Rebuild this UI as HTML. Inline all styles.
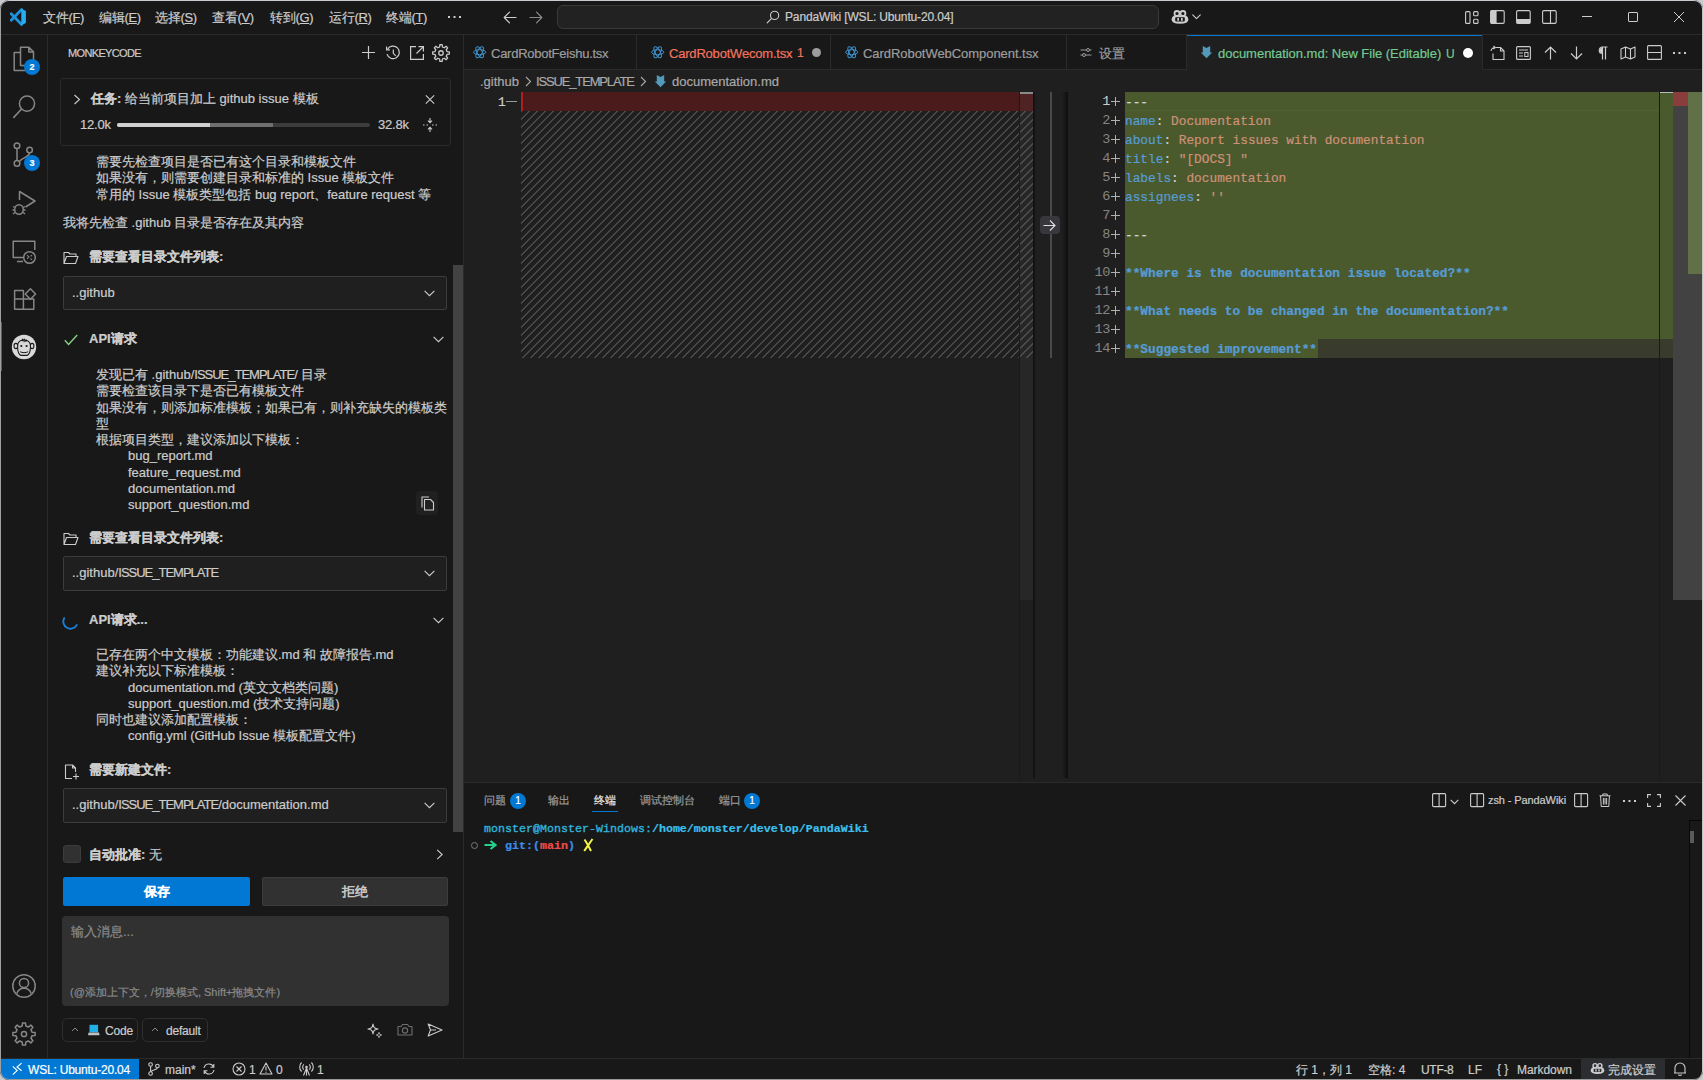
<!DOCTYPE html>
<html><head><meta charset="utf-8">
<style>
*{box-sizing:border-box;margin:0;padding:0}
html,body{width:1703px;height:1080px;overflow:hidden;background:#c8cacd}
body{font-family:"Liberation Sans",sans-serif;font-size:13px;color:#cccccc;position:relative;-webkit-text-stroke:0.2px currentColor}
.a{position:absolute;white-space:nowrap}
svg{position:absolute;overflow:visible}
#win{position:absolute;left:0;top:0;width:1703px;height:1080px;background:#181818;border-radius:9px;overflow:hidden}
#frame{position:absolute;left:0;top:0;width:1703px;height:1080px;border:1px solid #a0a0a0;border-top-color:#c8cbd0;border-right-color:#c4c4c4;border-bottom-color:#9a9a9a;border-radius:9px;pointer-events:none}
.mono{font-family:"Liberation Mono",monospace}
.b{font-weight:bold}
.ic{fill:none;stroke:#cccccc;stroke-width:1.2;stroke-linecap:round;stroke-linejoin:round}
</style></head><body>
<div id="win">
<!-- TITLE BAR -->
<div class="a" style="left:0;top:34px;width:1703px;height:1px;background:#2b2b2b"></div>
<svg style="left:6px;top:6px" width="24" height="24" viewBox="0 0 24 24"><path d="M15.6 3.6L5.2 14.3M15.6 18.4L5.2 7.7" stroke="#1c93dc" stroke-width="2.8" stroke-linecap="round"/><path d="M15.3 2.8L19.9 4.9V17.1L15.3 19.2Z" fill="#27acf2"/></svg>
<div class="a" style="left:43px;top:9px;font-size:13px;color:#cccccc;letter-spacing:-0.3px">文件(<u>F</u>)</div>
<div class="a" style="left:99px;top:9px;font-size:13px;color:#cccccc;letter-spacing:-0.3px">编辑(<u>E</u>)</div>
<div class="a" style="left:155px;top:9px;font-size:13px;color:#cccccc;letter-spacing:-0.3px">选择(<u>S</u>)</div>
<div class="a" style="left:212px;top:9px;font-size:13px;color:#cccccc;letter-spacing:-0.3px">查看(<u>V</u>)</div>
<div class="a" style="left:270px;top:9px;font-size:13px;color:#cccccc;letter-spacing:-0.3px">转到(<u>G</u>)</div>
<div class="a" style="left:329px;top:9px;font-size:13px;color:#cccccc;letter-spacing:-0.3px">运行(<u>R</u>)</div>
<div class="a" style="left:386px;top:9px;font-size:13px;color:#cccccc;letter-spacing:-0.3px">终端(<u>T</u>)</div>
<svg style="left:448px;top:16px" width="14" height="3"><rect x="0" y="0" width="2" height="2" fill="#ccc"/><rect x="5.5" y="0" width="2" height="2" fill="#ccc"/><rect x="11" y="0" width="2" height="2" fill="#ccc"/></svg>
<svg style="left:503px;top:11px" width="14" height="13" viewBox="0 0 14 13"><path class="ic" d="M13 6.5H1.2M6.5 1.2L1.2 6.5L6.5 11.8" style="stroke:#cccccc"/></svg>
<svg style="left:529px;top:11px" width="14" height="13" viewBox="0 0 14 13"><path class="ic" d="M1 6.5H12.8M7.5 1.2L12.8 6.5L7.5 11.8" style="stroke:#8a8a8a"/></svg>
<div class="a" style="left:557px;top:5px;width:602px;height:24px;background:#222222;border:1px solid #3a3a3a;border-radius:6px"></div>
<svg style="left:766px;top:10px" width="14" height="14" viewBox="0 0 14 14"><circle cx="8.6" cy="5.4" r="4.1" class="ic" style="stroke:#cccccc;stroke-width:1.1"/><path d="M5.6 8.4L1.2 12.8" class="ic" style="stroke:#cccccc;stroke-width:1.2"/></svg>
<div class="a" style="left:785px;top:10px;font-size:12px;color:#cccccc;letter-spacing:-0.15px">PandaWiki [WSL: Ubuntu-20.04]</div>
<svg style="left:1171px;top:9px" width="18" height="16" viewBox="0 0 18 16"><path d="M2.8 6.8Q0.6 7.8 0.6 10.6Q0.6 14.8 9 14.8Q17.4 14.8 17.4 10.6Q17.4 7.8 15.2 6.8Z" fill="#cccccc"/><rect x="4.2" y="8.2" width="9.6" height="4.2" rx="1" fill="#181818"/><rect x="6.3" y="9" width="1.7" height="2.8" fill="#ccc"/><rect x="10" y="9" width="1.7" height="2.8" fill="#ccc"/><circle cx="6" cy="4.5" r="2.5" fill="#181818" stroke="#ccc" stroke-width="1.8"/><circle cx="11.9" cy="4.5" r="2.5" fill="#181818" stroke="#ccc" stroke-width="1.8"/></svg>
<svg style="left:1192px;top:14px" width="9" height="6" viewBox="0 0 9 6"><path d="M0.7 0.8L4.5 4.6L8.3 0.8" class="ic" style="stroke:#ccc;stroke-width:1.1"/></svg>
<!-- layout icons -->
<svg style="left:1465px;top:11px" width="15" height="13" viewBox="0 0 15 13"><rect x="0.6" y="0.6" width="4.4" height="11.8" rx="1" class="ic" style="stroke-width:1.1"/><rect x="8.6" y="0.6" width="4.4" height="4.2" rx="1" class="ic" style="stroke-width:1.1"/><rect x="8.6" y="8.2" width="4.4" height="4.2" rx="1" class="ic" style="stroke-width:1.1"/></svg>
<svg style="left:1490px;top:10px" width="15" height="14" viewBox="0 0 15 14"><rect x="0.6" y="0.6" width="13.6" height="12.8" rx="1.3" class="ic" style="stroke-width:1.1"/><rect x="0.6" y="0.6" width="6" height="12.8" fill="#ccc"/></svg>
<svg style="left:1516px;top:10px" width="15" height="14" viewBox="0 0 15 14"><rect x="0.6" y="0.6" width="13.6" height="12.8" rx="1.3" class="ic" style="stroke-width:1.1"/><rect x="0.6" y="9" width="13.6" height="4.4" fill="#ccc"/></svg>
<svg style="left:1542px;top:10px" width="15" height="14" viewBox="0 0 15 14"><rect x="0.6" y="0.6" width="13.6" height="12.8" rx="1.3" class="ic" style="stroke-width:1.1"/><path d="M8.5 0.6V13.4" class="ic" style="stroke-width:1.1"/></svg>
<div class="a" style="left:1582px;top:16px;width:10px;height:1px;background:#cccccc"></div>
<div class="a" style="left:1628px;top:12px;width:10px;height:10px;border:1px solid #cccccc;border-radius:1px"></div>
<svg style="left:1674px;top:12px" width="10" height="10" viewBox="0 0 10 10"><path d="M0 0L10 10M10 0L0 10" stroke="#ccc" stroke-width="1"/></svg>
<!-- ACTIVITY BAR -->
<div class="a" style="left:47px;top:35px;width:1px;height:1023px;background:#2b2b2b"></div>
<svg style="left:12px;top:46px" width="24" height="26" viewBox="0 0 24 26"><path d="M8.5 1.2H16.8L21.5 5.9V19.5H8.5Z M16.8 1.2V5.9H21.5" fill="none" stroke="#868686" stroke-width="1.5" stroke-linejoin="round"/><path d="M8.5 6.5H2.2V24.5H15.5V19.5" fill="none" stroke="#868686" stroke-width="1.5" stroke-linejoin="round"/></svg>
<div class="a" style="left:24px;top:59px;width:16px;height:16px;border-radius:8px;background:#0078d4;color:#fff;font-size:9px;font-weight:bold;text-align:center;line-height:16px">2</div>
<svg style="left:12px;top:94px" width="25" height="26" viewBox="0 0 25 26"><circle cx="15" cy="9.6" r="7.6" fill="none" stroke="#868686" stroke-width="1.5"/><path d="M9.6 15L1.8 23.4" stroke="#868686" stroke-width="1.6" stroke-linecap="round"/></svg>
<svg style="left:12px;top:142px" width="24" height="26" viewBox="0 0 24 26"><circle cx="5" cy="3.8" r="2.8" fill="none" stroke="#868686" stroke-width="1.5"/><circle cx="5" cy="21.4" r="2.8" fill="none" stroke="#868686" stroke-width="1.5"/><circle cx="17.6" cy="8" r="2.8" fill="none" stroke="#868686" stroke-width="1.5"/><path d="M5 6.6V18.6M17.6 10.8C17.6 15 12 14.5 7.4 19.5" fill="none" stroke="#868686" stroke-width="1.5"/></svg>
<div class="a" style="left:24px;top:155px;width:16px;height:16px;border-radius:8px;background:#0078d4;color:#fff;font-size:9px;font-weight:bold;text-align:center;line-height:16px">3</div>
<svg style="left:11px;top:190px" width="26" height="26" viewBox="0 0 26 26"><path d="M8.5 10V1.5L24 11L14.5 17" fill="none" stroke="#868686" stroke-width="1.5" stroke-linejoin="round"/><ellipse cx="8" cy="19.5" rx="4.3" ry="4.8" fill="none" stroke="#868686" stroke-width="1.5"/><path d="M2 16.5L3.8 17.5M14 16.5L12.2 17.5M1.5 20H3.7M14.5 20H12.3M2 24L3.8 22.5M14 24L12.2 22.5" fill="none" stroke="#868686" stroke-width="1.4"/></svg>
<svg style="left:12px;top:240px" width="25" height="24" viewBox="0 0 25 24"><path d="M11 17.5H1.2V1.2H22.8V10" fill="none" stroke="#868686" stroke-width="1.5" stroke-linejoin="round"/><path d="M5 21.5H11" stroke="#868686" stroke-width="1.5"/><circle cx="17.5" cy="17.5" r="5.8" fill="none" stroke="#868686" stroke-width="1.5"/><path d="M15 15.2L17 17L15 18.8M20 15.2L18.6 16.3M18.6 18.5L20 19.8" fill="none" stroke="#868686" stroke-width="1.1"/></svg>
<svg style="left:13px;top:288px" width="24" height="24" viewBox="0 0 24 24"><path d="M1.6 2.6H10.4V11H20.8V21.2H1.6Z M1.6 11H10.4V21.2" fill="none" stroke="#868686" stroke-width="1.5" stroke-linejoin="round"/><path d="M17.4 0.8L22.6 6L17.4 11.2L12.2 6Z" fill="none" stroke="#868686" stroke-width="1.5" stroke-linejoin="round"/></svg>
<div class="a" style="left:0px;top:322px;width:2px;height:49px;background:#0078d4"></div>
<svg style="left:12px;top:335px" width="24" height="24" viewBox="0 0 24 24"><circle cx="12" cy="12" r="12.2" fill="#d9d9d9"/><g fill="none" stroke="#1a1a1a" stroke-width="1.1" stroke-linecap="round"><path d="M5.6 9.6C6.4 6.6 8.8 5 12 5C15.2 5 17.6 6.6 18.4 9.6"/><ellipse cx="3.9" cy="11" rx="1.9" ry="2.6"/><ellipse cx="20.1" cy="11" rx="1.8" ry="2.6"/><path d="M5.7 13.2C5.8 17 7 19.6 9 20.4H15C17 19.6 18.2 17 18.3 13.2"/><path d="M8.4 16.9C10.4 18 13.6 18 15.8 16.9" stroke-width="1"/></g><path d="M9 6L10.8 3.3L11.8 5L12.7 3.2L13.5 5.2L14.8 4.4L15 6.4Z M11.3 5.5L12 8L12.8 5.5Z" fill="#1a1a1a"/><circle cx="9.3" cy="11" r="1.1" fill="#1a1a1a"/><circle cx="14.6" cy="11" r="1.1" fill="#1a1a1a"/></svg>
<svg style="left:12px;top:974px" width="24" height="24" viewBox="0 0 24 24"><circle cx="12" cy="12" r="11.2" fill="none" stroke="#868686" stroke-width="1.5"/><circle cx="12" cy="9" r="4.6" fill="none" stroke="#868686" stroke-width="1.5"/><path d="M4.8 19.5C6 16 8.8 14.3 12 14.3C15.2 14.3 18 16 19.2 19.5" fill="none" stroke="#868686" stroke-width="1.5"/></svg>
<svg style="left:12px;top:1022px" width="24" height="24" viewBox="0 0 24 24"><path id="gear" d="M19.99 10.15L23.10 10.51L23.10 13.49L19.99 13.85L18.96 16.34L20.90 18.79L18.79 20.90L16.34 18.96L13.85 19.99L13.49 23.10L10.51 23.10L10.15 19.99L7.66 18.96L5.21 20.90L3.10 18.79L5.04 16.34L4.01 13.85L0.90 13.49L0.90 10.51L4.01 10.15L5.04 7.66L3.10 5.21L5.21 3.10L7.66 5.04L10.15 4.01L10.51 0.90L13.49 0.90L13.85 4.01L16.34 5.04L18.79 3.10L20.90 5.21L18.96 7.66Z" fill="none" stroke="#868686" stroke-width="1.5" stroke-linejoin="round"/><circle cx="12" cy="12" r="2.6" fill="none" stroke="#868686" stroke-width="1.5"/></svg>
<!-- SIDEBAR -->
<div class="a" style="left:463px;top:35px;width:1px;height:1023px;background:#2b2b2b"></div>
<div class="a" style="left:68px;top:45px;font-size:11px;line-height:16px;letter-spacing:-0.65px;color:#cccccc">MONKEYCODE</div>
<svg style="left:361px;top:45px" width="15" height="15" viewBox="0 0 15 15"><path d="M7.5 1V14M1 7.5H14" stroke="#ccc" stroke-width="1.2"/></svg>
<svg style="left:385px;top:45px" width="16" height="16" viewBox="0 0 16 16"><path d="M2.6 4.2A6.3 6.3 0 1 1 2 9.2" fill="none" stroke="#ccc" stroke-width="1.2"/><path d="M1.6 1.6V4.8H4.8" fill="none" stroke="#ccc" stroke-width="1.2"/><path d="M8.3 4.5V8.3L10.8 10.8" fill="none" stroke="#ccc" stroke-width="1.2"/></svg>
<svg style="left:409px;top:45px" width="16" height="16" viewBox="0 0 16 16"><path d="M7 1.6H1.6V14.4H14.4V9" fill="none" stroke="#ccc" stroke-width="1.2"/><path d="M9.5 1.6H14.4V6.5M14.4 1.6L7.5 8.5" fill="none" stroke="#ccc" stroke-width="1.2"/></svg>
<svg style="left:432px;top:44px" width="18" height="18" viewBox="0 0 24 24"><path d="M19.99 10.15L23.10 10.51L23.10 13.49L19.99 13.85L18.96 16.34L20.90 18.79L18.79 20.90L16.34 18.96L13.85 19.99L13.49 23.10L10.51 23.10L10.15 19.99L7.66 18.96L5.21 20.90L3.10 18.79L5.04 16.34L4.01 13.85L0.90 13.49L0.90 10.51L4.01 10.15L5.04 7.66L3.10 5.21L5.21 3.10L7.66 5.04L10.15 4.01L10.51 0.90L13.49 0.90L13.85 4.01L16.34 5.04L18.79 3.10L20.90 5.21L18.96 7.66Z" fill="none" stroke="#ccc" stroke-width="1.7" stroke-linejoin="round"/><circle cx="12" cy="12" r="3" fill="none" stroke="#ccc" stroke-width="1.7"/></svg>
<!-- task box -->
<div class="a" style="left:60px;top:78px;width:391px;height:68px;border:1px solid #2b2b2b;border-radius:3px"></div>
<svg style="left:73px;top:94px" width="8" height="11" viewBox="0 0 8 11"><path d="M1.5 1L6.5 5.5L1.5 10" fill="none" stroke="#ccc" stroke-width="1.1"/></svg>
<div class="a" style="left:91px;top:91px;line-height:16px;color:#cccccc"><b>任务:</b> 给当前项目加上 github issue 模板</div>
<svg style="left:425px;top:95px" width="10" height="9" viewBox="0 0 10 9"><path d="M0.8 0.3L9.2 8.7M9.2 0.3L0.8 8.7" stroke="#ccc" stroke-width="1.1"/></svg>
<div class="a" style="left:80px;top:117px;line-height:16px;color:#cccccc;letter-spacing:-0.2px">12.0k</div>
<div class="a" style="left:117px;top:123px;width:253px;height:4px;border-radius:2px;background:#3c3c3c;overflow:hidden"><div class="a" style="left:0;top:0;width:156px;height:4px;background:#6f6f6f"></div><div class="a" style="left:0;top:0;width:93px;height:4px;background:#d0d0d0"></div></div>
<div class="a" style="left:378px;top:117px;line-height:16px;color:#cccccc;letter-spacing:-0.2px">32.8k</div>
<svg style="left:422px;top:117px" width="16" height="16" viewBox="0 0 16 16"><path d="M8 1V5.5M6 3.6L8 5.6L10 3.6M8 15V10.5M6 12.4L8 10.4L10 12.4" fill="none" stroke="#ccc" stroke-width="1.1"/><path d="M1 8H2.5M4.5 8H6M10 8H11.5M13.5 8H15" stroke="#ccc" stroke-width="1.1"/></svg>
<div class="a" style="left:96px;top:154px;line-height:16.3px;color:#cccccc">需要先检查项目是否已有这个目录和模板文件<br>如果没有，则需要创建目录和标准的 Issue 模板文件<br>常用的 Issue 模板类型包括 bug report、feature request 等</div>
<div class="a" style="left:63px;top:215px;line-height:16px;color:#cccccc">我将先检查 .github 目录是否存在及其内容</div>
<!-- list 1 -->
<svg style="left:63px;top:251px" width="16" height="14" viewBox="0 0 16 14"><path d="M1 12.5V1.5H5.5L7 3H13V5.5M1 12.5L3.5 5.5H15L12.5 12.5Z" fill="none" stroke="#ccc" stroke-width="1.1" stroke-linejoin="round"/></svg>
<div class="a b" style="left:89px;top:249px;line-height:16px;color:#cccccc">需要查看目录文件列表:</div>
<div class="a" style="left:63px;top:276px;width:384px;height:34px;background:#1f1f1f;border:1px solid #3c3c3c;border-radius:2px"></div>
<div class="a" style="left:72px;top:285px;line-height:16px;color:#cccccc">..github</div>
<svg style="left:424px;top:290px" width="11" height="7" viewBox="0 0 11 7"><path d="M0.6 0.8L5.5 5.7L10.4 0.8" fill="none" stroke="#ccc" stroke-width="1.1"/></svg>
<svg style="left:64px;top:334px" width="14" height="12" viewBox="0 0 14 12"><path d="M0.8 6.2L4.6 10.5L13.2 1" fill="none" stroke="#89d185" stroke-width="1.4"/></svg>
<div class="a b" style="left:89px;top:331px;line-height:16px;color:#cccccc">API请求</div>
<svg style="left:433px;top:336px" width="11" height="7" viewBox="0 0 11 7"><path d="M0.6 0.8L5.5 5.7L10.4 0.8" fill="none" stroke="#ccc" stroke-width="1.1"/></svg>
<div class="a" style="left:96px;top:367px;line-height:16.3px;color:#cccccc;white-space:pre">发现已有 .github/<span style="letter-spacing:-1px">ISSUE_TEMPLATE</span>/ 目录
需要检查该目录下是否已有模板文件
如果没有，则添加标准模板；如果已有，则补充缺失的模板类
型
根据项目类型，建议添加以下模板：
<span style="display:inline-block;width:32px"></span>bug_report.md
<span style="display:inline-block;width:32px"></span>feature_request.md
<span style="display:inline-block;width:32px"></span>documentation.md
<span style="display:inline-block;width:32px"></span>support_question.md</div>
<div class="a" style="left:416px;top:491px;width:22px;height:24px;background:#202020;border-radius:4px"></div>
<svg style="left:420px;top:496px" width="15" height="15" viewBox="0 0 15 15"><path d="M4.5 3.5H10.5L13.5 6.5V14H4.5Z" fill="none" stroke="#ccc" stroke-width="1.1" stroke-linejoin="round"/><path d="M2 11.5V1H9" fill="none" stroke="#ccc" stroke-width="1.1"/></svg>
<!-- list 2 -->
<svg style="left:63px;top:532px" width="16" height="14" viewBox="0 0 16 14"><path d="M1 12.5V1.5H5.5L7 3H13V5.5M1 12.5L3.5 5.5H15L12.5 12.5Z" fill="none" stroke="#ccc" stroke-width="1.1" stroke-linejoin="round"/></svg>
<div class="a b" style="left:89px;top:530px;line-height:16px;color:#cccccc">需要查看目录文件列表:</div>
<div class="a" style="left:63px;top:556px;width:384px;height:35px;background:#1f1f1f;border:1px solid #3c3c3c;border-radius:2px"></div>
<div class="a" style="left:72px;top:565px;line-height:16px;color:#cccccc">..github/<span style="letter-spacing:-1px">ISSUE_TEMPLATE</span></div>
<svg style="left:424px;top:570px" width="11" height="7" viewBox="0 0 11 7"><path d="M0.6 0.8L5.5 5.7L10.4 0.8" fill="none" stroke="#ccc" stroke-width="1.1"/></svg>
<svg style="left:63px;top:614px" width="15" height="14" viewBox="0 0 15 14"><path d="M1.2 4A6.3 6.3 0 0 0 13.8 11" fill="none" stroke="#1a7fd6" stroke-width="1.8" stroke-linecap="round"/></svg>
<div class="a b" style="left:89px;top:612px;line-height:16px;color:#cccccc">API请求...</div>
<svg style="left:433px;top:617px" width="11" height="7" viewBox="0 0 11 7"><path d="M0.6 0.8L5.5 5.7L10.4 0.8" fill="none" stroke="#ccc" stroke-width="1.1"/></svg>
<div class="a" style="left:96px;top:647px;line-height:16.3px;color:#cccccc;white-space:pre">已存在两个中文模板：功能建议.md 和 故障报告.md
建议补充以下标准模板：
<span style="display:inline-block;width:32px"></span>documentation.md (英文文档类问题)
<span style="display:inline-block;width:32px"></span>support_question.md (技术支持问题)
同时也建议添加配置模板：
<span style="display:inline-block;width:32px"></span>config.yml (GitHub Issue 模板配置文件)</div>
<!-- new file -->
<svg style="left:64px;top:764px" width="16" height="16" viewBox="0 0 16 16"><path d="M8 14.5H1.5V1H8.5L11.5 4V8M8.5 1V4H11.5" fill="none" stroke="#ccc" stroke-width="1.1" stroke-linejoin="round"/><path d="M12 9.5V15.5M9 12.5H15" stroke="#ccc" stroke-width="1.1"/></svg>
<div class="a b" style="left:89px;top:762px;line-height:16px;color:#cccccc">需要新建文件:</div>
<div class="a" style="left:63px;top:788px;width:384px;height:35px;background:#1f1f1f;border:1px solid #3c3c3c;border-radius:2px"></div>
<div class="a" style="left:72px;top:797px;line-height:16px;color:#cccccc">..github/<span style="letter-spacing:-1px">ISSUE_TEMPLATE</span>/documentation.md</div>
<svg style="left:424px;top:802px" width="11" height="7" viewBox="0 0 11 7"><path d="M0.6 0.8L5.5 5.7L10.4 0.8" fill="none" stroke="#ccc" stroke-width="1.1"/></svg>
<!-- sidebar scrollbar -->
<div class="a" style="left:453px;top:265px;width:10px;height:567px;background:#424242"></div>
<!-- auto approve -->
<div class="a" style="left:63px;top:845px;width:18px;height:18px;background:#313131;border:1px solid #3c3c3c;border-radius:3px"></div>
<div class="a" style="left:89px;top:847px;line-height:16px;color:#cccccc"><b>自动批准:</b> 无</div>
<svg style="left:436px;top:849px" width="8" height="11" viewBox="0 0 8 11"><path d="M1.2 0.8L6.2 5.5L1.2 10.2" fill="none" stroke="#ccc" stroke-width="1.1"/></svg>
<div class="a b" style="left:63px;top:877px;width:187px;height:29px;background:#0078d4;border-radius:2px;color:#fff;text-align:center;line-height:29px">保存</div>
<div class="a" style="left:262px;top:877px;width:186px;height:29px;background:#313131;border:1px solid #3c3c3c;border-radius:2px;color:#cccccc;text-align:center;line-height:27px;-webkit-text-stroke:0.5px #cccccc">拒绝</div>
<div class="a" style="left:62px;top:916px;width:387px;height:90px;background:#313131;border-radius:4px"></div>
<div class="a" style="left:71px;top:924px;line-height:16px;color:#8a8a8a">输入消息...</div>
<div class="a" style="left:70px;top:985px;line-height:14px;font-size:11px;color:#8a8a8a">(@添加上下文，/切换模式, Shift+拖拽文件)</div>
<div class="a" style="left:62px;top:1018px;width:76px;height:24px;border:1px solid #2f2f2f;border-radius:5px"></div>
<div class="a" style="left:142px;top:1018px;width:66px;height:24px;border:1px solid #2f2f2f;border-radius:5px"></div>
<svg style="left:71px;top:1027px" width="8" height="5" viewBox="0 0 8 5"><path d="M1 4L4 1L7 4" fill="none" stroke="#8a8a8a" stroke-width="1"/></svg>
<svg style="left:88px;top:1024px" width="13" height="12" viewBox="0 0 13 12"><rect x="1.5" y="0.8" width="8.6" height="7.5" fill="#22b0e8"/><path d="M0.6 8.6H11L11.6 11.2H0Z" fill="#c0c0c0"/></svg>
<div class="a" style="left:105px;top:1023px;line-height:16px;font-size:12px;color:#cccccc;letter-spacing:-0.2px">Code</div>
<svg style="left:151px;top:1027px" width="8" height="5" viewBox="0 0 8 5"><path d="M1 4L4 1L7 4" fill="none" stroke="#8a8a8a" stroke-width="1"/></svg>
<div class="a" style="left:166px;top:1023px;line-height:16px;font-size:12px;color:#cccccc;letter-spacing:-0.2px">default</div>
<svg style="left:367px;top:1023px" width="16" height="15" viewBox="0 0 16 15"><path d="M6 1C6.5 4.5 7.5 5.5 11 6C7.5 6.5 6.5 7.5 6 11C5.5 7.5 4.5 6.5 1 6C4.5 5.5 5.5 4.5 6 1Z" fill="none" stroke="#ccc" stroke-width="1.1" stroke-linejoin="round"/><path d="M12 9.5C12.2 11 12.7 11.6 14.5 12C12.7 12.4 12.2 13 12 14.5C11.8 13 11.3 12.4 9.5 12C11.3 11.6 11.8 11 12 9.5Z" fill="none" stroke="#ccc" stroke-width="1"/></svg>
<svg style="left:397px;top:1023px" width="16" height="13" viewBox="0 0 16 13"><path d="M1 3.5H4L5.5 1.5H10.5L12 3.5H15V12H1Z" fill="none" stroke="#6f6f6f" stroke-width="1.1" stroke-linejoin="round"/><circle cx="8" cy="7.5" r="2.6" fill="none" stroke="#6f6f6f" stroke-width="1.1"/></svg>
<svg style="left:427px;top:1023px" width="16" height="14" viewBox="0 0 16 14"><path d="M1.2 1L15 7L1.2 13L3.5 7Z M3.5 7H9" fill="none" stroke="#ccc" stroke-width="1.1" stroke-linejoin="round"/></svg>
<!-- EDITOR -->
<div class="a" style="left:464px;top:35px;width:1239px;height:747px;background:#1f1f1f"></div>
<!-- tab bar -->
<div class="a" style="left:464px;top:35px;width:1239px;height:35px;background:#181818"></div>
<div class="a" style="left:464px;top:69px;width:1239px;height:1px;background:#2b2b2b"></div>
<div class="a" style="left:636px;top:35px;width:1px;height:34px;background:#2b2b2b"></div>
<div class="a" style="left:830px;top:35px;width:1px;height:34px;background:#2b2b2b"></div>
<div class="a" style="left:1066px;top:35px;width:1px;height:34px;background:#2b2b2b"></div>
<div class="a" style="left:1186px;top:35px;width:1px;height:34px;background:#2b2b2b"></div>
<div class="a" style="left:1482px;top:35px;width:1px;height:34px;background:#2b2b2b"></div>
<div class="a" style="left:1187px;top:35px;width:295px;height:35px;background:#1f1f1f"></div>
<div class="a" style="left:1187px;top:35px;width:295px;height:1px;background:#0078d4"></div>
<svg style="left:473px;top:46px" width="14" height="13" viewBox="0 0 14 13"><g fill="none" stroke="#3f91cc" stroke-width="1"><ellipse cx="6.7" cy="6.2" rx="6.1" ry="2.5"/><ellipse cx="6.7" cy="6.2" rx="6.1" ry="2.5" transform="rotate(60 6.7 6.2)"/><ellipse cx="6.7" cy="6.2" rx="6.1" ry="2.5" transform="rotate(-60 6.7 6.2)"/></g></svg>
<div class="a" style="left:491px;top:46px;line-height:16px;color:#9d9d9d;letter-spacing:-0.25px">CardRobotFeishu.tsx</div>
<svg style="left:651px;top:46px" width="14" height="13" viewBox="0 0 14 13"><g fill="none" stroke="#3f91cc" stroke-width="1"><ellipse cx="6.7" cy="6.2" rx="6.1" ry="2.5"/><ellipse cx="6.7" cy="6.2" rx="6.1" ry="2.5" transform="rotate(60 6.7 6.2)"/><ellipse cx="6.7" cy="6.2" rx="6.1" ry="2.5" transform="rotate(-60 6.7 6.2)"/></g></svg>
<div class="a" style="left:669px;top:46px;line-height:16px;color:#f0745e;letter-spacing:-0.2px">CardRobotWecom.tsx</div>
<div class="a" style="left:797px;top:45px;line-height:16px;color:#f0745e;font-size:12px">1</div>
<div class="a" style="left:812px;top:48px;width:9px;height:9px;border-radius:5px;background:#9d9d9d"></div>
<svg style="left:845px;top:46px" width="14" height="13" viewBox="0 0 14 13"><g fill="none" stroke="#3f91cc" stroke-width="1"><ellipse cx="6.7" cy="6.2" rx="6.1" ry="2.5"/><ellipse cx="6.7" cy="6.2" rx="6.1" ry="2.5" transform="rotate(60 6.7 6.2)"/><ellipse cx="6.7" cy="6.2" rx="6.1" ry="2.5" transform="rotate(-60 6.7 6.2)"/></g></svg>
<div class="a" style="left:863px;top:46px;line-height:16px;color:#9d9d9d;letter-spacing:-0.05px">CardRobotWebComponent.tsx</div>
<svg style="left:1080px;top:47px" width="12" height="11" viewBox="0 0 12 11"><path d="M0.5 3H6.5M9.5 3H11.5M0.5 8H2.5M5.5 8H11.5" stroke="#9d9d9d" stroke-width="1"/><circle cx="8" cy="3" r="1.5" fill="none" stroke="#9d9d9d" stroke-width="1"/><circle cx="4" cy="8" r="1.5" fill="none" stroke="#9d9d9d" stroke-width="1"/></svg>
<div class="a" style="left:1099px;top:46px;line-height:16px;color:#9d9d9d">设置</div>
<svg style="left:1201px;top:46px" width="12" height="13" viewBox="0 0 12 13"><path d="M1.8 0L5.5 2L9.2 0V6.5H11.2L5.5 12.2L-0.2 6.5H1.8Z" fill="#519aba"/></svg>
<div class="a" style="left:1218px;top:46px;line-height:16px;color:#73c991;letter-spacing:-0.02px">documentation.md: New File (Editable)</div>
<div class="a" style="left:1446px;top:46px;line-height:16px;color:#73c991;font-size:12px">U</div>
<div class="a" style="left:1463px;top:48px;width:10px;height:10px;border-radius:5px;background:#ffffff"></div>
<!-- editor actions -->
<svg style="left:1490px;top:45px" width="16" height="16" viewBox="0 0 16 16"><path d="M6 2.5H10.5L14 6V14.5H3V8.5" fill="none" stroke="#ccc" stroke-width="1.1" stroke-linejoin="round"/><path d="M10.5 2.5V6H14" fill="none" stroke="#ccc" stroke-width="1.1"/><path d="M1 6C1.5 3.5 3 2.5 5 2.5M3.5 0.8L5.3 2.5L3.5 4.2" fill="none" stroke="#ccc" stroke-width="1.1"/></svg>
<svg style="left:1516px;top:46px" width="15" height="14" viewBox="0 0 15 14"><rect x="0.6" y="0.6" width="13.8" height="12.8" rx="1" fill="none" stroke="#ccc" stroke-width="1.1"/><path d="M3 4H12M3 7H7M3 10H7" stroke="#ccc" stroke-width="1.1"/><rect x="8.8" y="6.5" width="3.2" height="4" fill="none" stroke="#ccc" stroke-width="1"/></svg>
<svg style="left:1544px;top:46px" width="13" height="14" viewBox="0 0 13 14"><path d="M6.5 13.5V1M1 6.5L6.5 1L12 6.5" fill="none" stroke="#ccc" stroke-width="1.2"/></svg>
<svg style="left:1570px;top:46px" width="13" height="14" viewBox="0 0 13 14"><path d="M6.5 0.5V13M1 7.5L6.5 13L12 7.5" fill="none" stroke="#ccc" stroke-width="1.2"/></svg>
<svg style="left:1596px;top:46px" width="12" height="14" viewBox="0 0 12 14"><path d="M5.5 1H11.5M6.5 1V13.5M9.5 1V13.5M6.5 1A3 3 0 0 0 6.5 7.5" fill="none" stroke="#ccc" stroke-width="1.2"/><path d="M6.5 1.5A2.6 2.6 0 0 0 6.5 7 Z" fill="#ccc"/></svg>
<svg style="left:1620px;top:46px" width="16" height="14" viewBox="0 0 16 14"><path d="M1 3L5.5 1V11L1 13Z M5.5 1L10.5 3V13L5.5 11 M10.5 3L15 1V11L10.5 13" fill="none" stroke="#ccc" stroke-width="1.1" stroke-linejoin="round"/></svg>
<svg style="left:1647px;top:45px" width="15" height="15" viewBox="0 0 15 15"><rect x="0.6" y="0.6" width="13.8" height="13.8" rx="1" fill="none" stroke="#ccc" stroke-width="1.1"/><path d="M0.6 7.5H14.4" stroke="#ccc" stroke-width="1.1"/></svg>
<svg style="left:1673px;top:52px" width="14" height="3"><rect x="0" y="0" width="2" height="2" fill="#ccc"/><rect x="5.5" y="0" width="2" height="2" fill="#ccc"/><rect x="11" y="0" width="2" height="2" fill="#ccc"/></svg>
<!-- breadcrumbs -->
<div class="a" style="left:480px;top:74px;line-height:16px;color:#a9a9a9">.github</div>
<svg style="left:525px;top:76px" width="7" height="11" viewBox="0 0 7 11"><path d="M1 1L5.5 5.5L1 10" fill="none" stroke="#a9a9a9" stroke-width="1.1"/></svg>
<div class="a" style="left:536px;top:74px;line-height:16px;color:#a9a9a9;letter-spacing:-1.15px">ISSUE_TEMPLATE</div>
<svg style="left:640px;top:76px" width="7" height="11" viewBox="0 0 7 11"><path d="M1 1L5.5 5.5L1 10" fill="none" stroke="#a9a9a9" stroke-width="1.1"/></svg>
<svg style="left:655px;top:75px" width="12" height="13" viewBox="0 0 12 13"><path d="M1.8 0L5.5 2L9.2 0V6.5H11.2L5.5 12.2L-0.2 6.5H1.8Z" fill="#519aba"/></svg>
<div class="a" style="left:672px;top:74px;line-height:16px;color:#a9a9a9">documentation.md</div>
<!-- DIFF -->
<div class="a" style="left:521px;top:92px;width:512px;height:19px;background:#4b1a1a"></div>
<div class="a" style="left:521px;top:92px;width:2px;height:19px;background:#b01e1e"></div>
<div class="a" style="left:521px;top:111px;width:512px;height:247px;background:repeating-linear-gradient(-45deg,#1f1f1f 0px,#1f1f1f 4.2px,#4a4a4a 4.2px,#4a4a4a 5.65px)"></div>
<div class="a mono" style="left:498px;top:93px;font-size:12.8px;line-height:19px;color:#cccccc">1</div>
<div class="a" style="left:506px;top:101px;width:11px;height:1px;background:#9a9a9a"></div>
<div class="a" style="left:1019px;top:92px;width:1px;height:690px;background:#181b1e"></div>
<div class="a" style="left:1020px;top:92px;width:13px;height:508px;background:rgba(121,121,121,0.10)"></div>
<div class="a" style="left:1020px;top:92px;width:13px;height:2px;background:#8a8a8a"></div>
<div class="a" style="left:1033px;top:92px;width:3px;height:686px;background:linear-gradient(90deg,#0e0e0e,rgba(31,31,31,0))"></div>
<div class="a" style="left:1050px;top:92px;width:2px;height:266px;background:#4a4a4a"></div>
<div class="a" style="left:1040px;top:216px;width:20px;height:18px;background:#37373c;border-radius:4px"></div>
<svg style="left:1043px;top:219px" width="13" height="13" viewBox="0 0 13 13"><path d="M0.5 6.5H12M7 1.5L12 6.5L7 11.5" fill="none" stroke="#e0e0e0" stroke-width="1.1"/></svg>
<div class="a" style="left:1062px;top:92px;width:6px;height:686px;background:linear-gradient(90deg,rgba(31,31,31,0),#0e0e0e)"></div>
<!-- right pane -->
<div class="a" style="left:1125px;top:92px;width:548px;height:247px;background:#4b5a2d"></div>
<div class="a" style="left:1125px;top:339px;width:548px;height:19px;background:#393c2c"></div>
<div class="a" style="left:1125px;top:339px;width:193px;height:19px;background:#4b5a2d"></div>
<div class="a" style="left:1125px;top:110px;width:534px;height:1px;background:rgba(255,255,255,0.04)"></div>
<div class="a mono" style="left:1076px;top:92px;width:34px;text-align:right;font-size:13.6px;line-height:19px;color:#858585;letter-spacing:-0.4px;-webkit-text-stroke:0"><div style="height:19px;color:#cccccc">1</div><div style="height:19px">2</div><div style="height:19px">3</div><div style="height:19px">4</div><div style="height:19px">5</div><div style="height:19px">6</div><div style="height:19px">7</div><div style="height:19px">8</div><div style="height:19px">9</div><div style="height:19px">10</div><div style="height:19px">11</div><div style="height:19px">12</div><div style="height:19px">13</div><div style="height:19px">14</div></div>
<svg style="left:0;top:0" width="1703" height="400" viewBox="0 0 1703 400"><path d="M1111 101.5H1120M1115.5 97V106M1111 120.5H1120M1115.5 116V125M1111 139.5H1120M1115.5 135V144M1111 158.5H1120M1115.5 154V163M1111 177.5H1120M1115.5 173V182M1111 196.5H1120M1115.5 192V201M1111 215.5H1120M1115.5 211V220M1111 234.5H1120M1115.5 230V239M1111 253.5H1120M1115.5 249V258M1111 272.5H1120M1115.5 268V277M1111 291.5H1120M1115.5 287V296M1111 310.5H1120M1115.5 306V315M1111 329.5H1120M1115.5 325V334M1111 348.5H1120M1115.5 344V353" stroke="#b0b0b0" stroke-width="1" fill="none"/></svg>
<div class="a mono" style="left:1125px;top:93px;font-size:12.8px;line-height:19px;white-space:pre"><span style="color:#d4d4d4">---</span>
<span style="color:#569cd6">name</span><span style="color:#cccccc">: </span><span style="color:#ce9178">Documentation</span>
<span style="color:#569cd6">about</span><span style="color:#cccccc">: </span><span style="color:#ce9178">Report issues with documentation</span>
<span style="color:#569cd6">title</span><span style="color:#cccccc">: </span><span style="color:#ce9178">"[DOCS] "</span>
<span style="color:#569cd6">labels</span><span style="color:#cccccc">: </span><span style="color:#ce9178">documentation</span>
<span style="color:#569cd6">assignees</span><span style="color:#cccccc">: </span><span style="color:#ce9178">''</span>

<span style="color:#d4d4d4">---</span>

<span style="color:#569cd6;font-weight:bold">**Where is the documentation issue located?**</span>

<span style="color:#569cd6;font-weight:bold">**What needs to be changed in the documentation?**</span>

<span style="color:#569cd6;font-weight:bold">**Suggested improvement**</span></div>
<div class="a" style="left:1659px;top:92px;width:1px;height:690px;background:#1a1a1a"></div>
<div class="a" style="left:1660px;top:92px;width:13px;height:1px;background:#bbbbbb"></div>
<div class="a" style="left:1673px;top:92px;width:29px;height:508px;background:#424242"></div>
<div class="a" style="left:1673px;top:92px;width:15px;height:14px;background:#8a3d3d"></div>
<div class="a" style="left:1688px;top:92px;width:14px;height:182px;background:#627047"></div>
<!-- PANEL -->
<div class="a" style="left:464px;top:782px;width:1239px;height:1px;background:#2b2b2b"></div>
<div class="a" style="left:484px;top:793px;line-height:14px;font-size:11px;color:#9d9d9d">问题</div>
<div class="a" style="left:510px;top:793px;width:16px;height:16px;border-radius:8px;background:#0078d4;color:#fff;font-size:10px;text-align:center;line-height:16px">1</div>
<div class="a" style="left:548px;top:793px;line-height:14px;font-size:11px;color:#9d9d9d">输出</div>
<div class="a" style="left:594px;top:793px;line-height:14px;font-size:11px;color:#e7e7e7">终端</div>
<div class="a" style="left:592px;top:811px;width:26px;height:1px;background:#0078d4"></div>
<div class="a" style="left:640px;top:793px;line-height:14px;font-size:11px;color:#9d9d9d">调试控制台</div>
<div class="a" style="left:719px;top:793px;line-height:14px;font-size:11px;color:#9d9d9d">端口</div>
<div class="a" style="left:744px;top:793px;width:16px;height:16px;border-radius:8px;background:#0078d4;color:#fff;font-size:10px;text-align:center;line-height:16px">1</div>
<!-- panel actions -->
<svg style="left:1432px;top:793px" width="15" height="15" viewBox="0 0 15 15"><rect x="0.6" y="0.6" width="13" height="13" rx="1" fill="none" stroke="#ccc" stroke-width="1.1"/><path d="M7.1 0.6V13.6" stroke="#ccc" stroke-width="1.1"/></svg>
<svg style="left:1450px;top:799px" width="9" height="6" viewBox="0 0 9 6"><path d="M0.7 0.8L4.5 4.6L8.3 0.8" fill="none" stroke="#ccc" stroke-width="1.1"/></svg>
<svg style="left:1470px;top:793px" width="15" height="15" viewBox="0 0 15 15"><rect x="0.6" y="0.6" width="13" height="13" rx="1" fill="none" stroke="#ccc" stroke-width="1.1"/><path d="M7.1 0.6V13.6" stroke="#ccc" stroke-width="1.1"/></svg>
<div class="a" style="left:1488px;top:793px;line-height:14px;font-size:11px;color:#cccccc;letter-spacing:-0.1px">zsh - PandaWiki</div>
<svg style="left:1574px;top:793px" width="15" height="15" viewBox="0 0 15 15"><rect x="0.6" y="0.6" width="13" height="13" rx="1" fill="none" stroke="#ccc" stroke-width="1.1"/><path d="M7.1 0.6V13.6" stroke="#ccc" stroke-width="1.1"/></svg>
<svg style="left:1599px;top:793px" width="12" height="15" viewBox="0 0 12 15"><path d="M0.5 2.8H11.5M3.8 2.8V1H8.2V2.8M1.6 2.8L2.2 13.5H9.8L10.4 2.8M4.4 5V11.5M6 5V11.5M7.6 5V11.5" fill="none" stroke="#cccccc" stroke-width="1"/></svg>
<svg style="left:1623px;top:800px" width="14" height="3"><rect x="0" y="0" width="2" height="2" fill="#ccc"/><rect x="5.5" y="0" width="2" height="2" fill="#ccc"/><rect x="11" y="0" width="2" height="2" fill="#ccc"/></svg>
<svg style="left:1647px;top:794px" width="14" height="13" viewBox="0 0 14 13"><path d="M0.6 4V0.6H4M10 0.6H13.4V4M13.4 9V12.4H10M4 12.4H0.6V9" fill="none" stroke="#ccc" stroke-width="1.1"/></svg>
<svg style="left:1675px;top:795px" width="11" height="11" viewBox="0 0 11 11"><path d="M0.5 0.5L10.5 10.5M10.5 0.5L0.5 10.5" stroke="#ccc" stroke-width="1.1"/></svg>
<!-- terminal -->
<div class="a mono" style="left:484px;top:821px;font-size:11.67px;line-height:17px;white-space:pre"><span style="color:#2fb4dc;-webkit-text-stroke:0.35px #2fb4dc">monster@Monster-Windows:</span><span style="color:#3cc0ee;font-weight:bold">/home/monster/develop/PandaWiki</span>
<span style="color:#23d18b;font-weight:bold"> </span>  <span style="color:#3b8eea;font-weight:bold">git:(</span><span style="color:#f14c4c;font-weight:bold">main</span><span style="color:#3b8eea;font-weight:bold">)</span> <span style="color:#f5f543;font-weight:bold"> </span></div>
<div class="a" style="left:471px;top:842px;width:7px;height:7px;border-radius:4px;border:1px solid #7a7a7a"></div>
<svg style="left:484px;top:840px" width="14" height="10" viewBox="0 0 14 10"><path d="M0.5 5H10M6.5 1L11.5 5L6.5 9" fill="none" stroke="#23d18b" stroke-width="2.2" stroke-linejoin="miter"/></svg>
<svg style="left:583px;top:838px" width="11" height="14" viewBox="0 0 11 14"><path d="M1.5 1.5C4 5 6 9 8 13M9.5 1C7 4.5 4 9 1.2 13" fill="none" stroke="#f5f543" stroke-width="2"/></svg>
<div class="a" style="left:1689px;top:820px;width:1px;height:238px;background:#080808"></div><div class="a" style="left:1689px;top:820px;width:13px;height:1px;background:#080808"></div>
<div class="a" style="left:1690px;top:831px;width:4px;height:12px;background:#5a5a5a"></div>
<!-- STATUS BAR -->
<div class="a" style="left:0;top:1058px;width:1703px;height:1px;background:#2b2b2b"></div>
<div class="a" style="left:1px;top:1059px;width:138px;height:21px;background:#0078d4"></div>
<svg style="left:10px;top:1060px" width="14" height="16" viewBox="0 0 14 16"><path d="M2.8 6.3L7.2 10.5L2.8 14.7M11.6 3.2L7 7L11.6 10.7" fill="none" stroke="#fff" stroke-width="1.1"/></svg>
<div class="a" style="left:28px;top:1062px;line-height:16px;font-size:12px;color:#ffffff;letter-spacing:-0.2px">WSL: Ubuntu-20.04</div>
<svg style="left:148px;top:1062px" width="12" height="14" viewBox="0 0 12 14"><circle cx="2.6" cy="2.5" r="1.8" fill="none" stroke="#ccc" stroke-width="1.1"/><circle cx="2.6" cy="11.5" r="1.8" fill="none" stroke="#ccc" stroke-width="1.1"/><circle cx="9.4" cy="4" r="1.8" fill="none" stroke="#ccc" stroke-width="1.1"/><path d="M2.6 4.3V9.7M9.4 5.8C9.4 8 4.5 7.5 3 9.8" fill="none" stroke="#ccc" stroke-width="1.1"/></svg>
<div class="a" style="left:165px;top:1062px;line-height:16px;font-size:12px;color:#cccccc">main*</div>
<svg style="left:202px;top:1063px" width="14" height="12" viewBox="0 0 14 12"><path d="M2 5A5 5 0 0 1 11.5 4M12 7A5 5 0 0 1 2.5 8M11.8 1V4.3H8.5M2.2 11V7.7H5.5" fill="none" stroke="#ccc" stroke-width="1.1"/></svg>
<svg style="left:232px;top:1062px" width="14" height="14" viewBox="0 0 14 14"><circle cx="7" cy="7" r="6" fill="none" stroke="#ccc" stroke-width="1.1"/><path d="M4.5 4.5L9.5 9.5M9.5 4.5L4.5 9.5" stroke="#ccc" stroke-width="1.1"/></svg>
<div class="a" style="left:249px;top:1062px;line-height:16px;font-size:12px;color:#cccccc">1</div>
<svg style="left:259px;top:1062px" width="14" height="13" viewBox="0 0 14 13"><path d="M7 1L13 12H1Z M7 4.5V8.5M7 9.8V10.8" fill="none" stroke="#ccc" stroke-width="1.1" stroke-linejoin="round"/></svg>
<div class="a" style="left:276px;top:1062px;line-height:16px;font-size:12px;color:#cccccc">0</div>
<svg style="left:300px;top:1062px" width="13" height="14" viewBox="0 0 13 14"><circle cx="6.5" cy="5" r="1.3" fill="#ccc"/><path d="M6.5 6V13.5M3.5 13.5L6.5 6L9.5 13.5M3.8 2.3A3.8 3.8 0 0 0 3.8 7.7M9.2 2.3A3.8 3.8 0 0 1 9.2 7.7M1.6 0.5A6.3 6.3 0 0 0 1.6 9.5M11.4 0.5A6.3 6.3 0 0 1 11.4 9.5" fill="none" stroke="#ccc" stroke-width="1.1"/></svg>
<div class="a" style="left:317px;top:1062px;line-height:16px;font-size:12px;color:#cccccc">1</div>
<div class="a" style="left:1296px;top:1062px;line-height:16px;font-size:12px;color:#cccccc">行 1，列 1</div>
<div class="a" style="left:1368px;top:1062px;line-height:16px;font-size:12px;color:#cccccc">空格: 4</div>
<div class="a" style="left:1421px;top:1062px;line-height:16px;font-size:12px;color:#cccccc;letter-spacing:-0.3px">UTF-8</div>
<div class="a" style="left:1468px;top:1062px;line-height:16px;font-size:12px;color:#cccccc">LF</div>
<div class="a" style="left:1497px;top:1061px;line-height:16px;font-size:12px;color:#cccccc">{ }</div>
<div class="a" style="left:1517px;top:1062px;line-height:16px;font-size:12px;color:#cccccc;letter-spacing:-0.05px">Markdown</div>
<div class="a" style="left:1581px;top:1059px;width:84px;height:20px;background:#2b2d31"></div>
<svg style="left:1590px;top:1062px" width="15" height="13" viewBox="0 0 18 16"><path d="M2.8 6.8Q0.6 7.8 0.6 10.6Q0.6 14.8 9 14.8Q17.4 14.8 17.4 10.6Q17.4 7.8 15.2 6.8Z" fill="#cccccc"/><rect x="4.2" y="8.2" width="9.6" height="4.2" rx="1" fill="#2b2d31"/><rect x="6.3" y="9" width="1.7" height="2.8" fill="#ccc"/><rect x="10" y="9" width="1.7" height="2.8" fill="#ccc"/><circle cx="6" cy="4.5" r="2.5" fill="#2b2d31" stroke="#ccc" stroke-width="1.8"/><circle cx="11.9" cy="4.5" r="2.5" fill="#2b2d31" stroke="#ccc" stroke-width="1.8"/></svg>
<div class="a" style="left:1608px;top:1062px;line-height:16px;font-size:12px;color:#cccccc">完成设置</div>
<svg style="left:1673px;top:1062px" width="14" height="14" viewBox="0 0 14 14"><path d="M2 11V6A5 5 0 0 1 12 6V11H1H13" fill="none" stroke="#ccc" stroke-width="1.1"/><path d="M5.5 12.5A1.6 1.6 0 0 0 8.5 12.5" fill="none" stroke="#ccc" stroke-width="1.1"/></svg>
</div>
<div id="frame"></div>
</body></html>
